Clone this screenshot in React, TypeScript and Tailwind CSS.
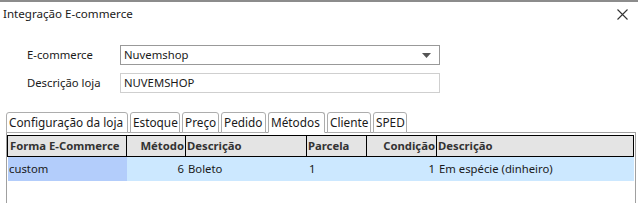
import React from 'react';

const tabs = [
    { label: 'Configuração da loja', w: 'w-[122px]' },
    { label: 'Estoque', w: 'w-[50px]' },
    { label: 'Preço', w: 'w-[37px]' },
    { label: 'Pedido', w: 'w-[45px]' },
    { label: 'Métodos', w: 'w-[57px]', active: true },
    { label: 'Cliente', w: 'w-[44px]' },
    { label: 'SPED', w: 'w-[34px]' },
];

const cols = 'grid grid-cols-[119px_59px_121px_60px_70px_1fr]';

export default function App() {
    return (
        <div
            className="relative w-[638px] h-[203px] overflow-hidden bg-white border-t-2 border-[#8c8c8c] text-[11.3px] text-[#1a1a1a]"
            style={{ fontFamily: '"Noto Sans", "Open Sans", sans-serif' }}
        >
            {/* title bar */}
            <div className="flex items-center justify-between h-[24px] pl-[3px] pr-[10px]">
                <span className="text-[11.6px]">Integração E-commerce</span>
                <svg width="11" height="11" viewBox="0 0 11 11" className="text-[#333]">
                    <path d="M0.5 0.5L10.5 10.5M10.5 0.5L0.5 10.5" stroke="currentColor" strokeWidth="1.1" />
                </svg>
            </div>

            {/* form */}
            <div className="flex flex-col gap-[8px] pt-[19px] pl-[27px]">
                <div className="flex items-center h-[20px]">
                    <span className="w-[93px]">E-commerce</span>
                    <div className="flex items-center justify-between w-[320px] h-[20px] border border-[#999] px-[3px]">
                        <span>Nuvemshop</span>
                        <svg width="9" height="5" viewBox="0 0 9 5" className="mr-[5px]">
                            <path d="M0 0H9L4.5 5Z" fill="#555" />
                        </svg>
                    </div>
                </div>
                <div className="flex items-center h-[20px]">
                    <span className="w-[93px]">Descrição loja</span>
                    <div className="flex items-center w-[320px] h-[20px] border border-[#cfcfcf] px-[3px]">
                        <span>NUVEMSHOP</span>
                    </div>
                </div>
            </div>

            {/* tabs */}
            <div className="flex gap-[2px] mt-[19px] pl-[6px] h-[21px] items-end">
                {tabs.map((t) => (
                    <div
                        key={t.label}
                        className={`${t.w} h-[21px] pl-[2px] leading-[19px] border border-[#adadad] rounded-t-[3px] bg-white whitespace-nowrap text-[11.8px] ${t.active ? 'border-b-white relative z-10' : ''}`}
                    >
                        {t.label}
                    </div>
                ))}
            </div>

            {/* panel */}
            <div className="ml-[6px] mr-[2px] -mt-px h-[80px] border-t border-l border-r border-[#a0a0a0] pt-[2px]">
                <div className="mr-px border border-black">
                    <div className={`${cols} h-[20px] bg-[#e4e4e4] font-bold text-[#333] leading-[19px] whitespace-nowrap`}>
                        <div className="border-r border-black pl-[2px] overflow-hidden">Forma E-Commerce</div>
                        <div className="border-r border-black pr-px text-right overflow-hidden">Método</div>
                        <div className="border-r border-black pl-px overflow-hidden">Descrição</div>
                        <div className="border-r border-black pl-px overflow-hidden">Parcela</div>
                        <div className="border-r border-black pr-px text-right overflow-hidden">Condição</div>
                        <div className="pl-px overflow-hidden">Descrição</div>
                    </div>
                </div>
                <div className={`${cols} h-[24px] leading-[24px] bg-[#cce8ff] mr-px ml-px whitespace-nowrap`}>
                    <div className="bg-[#b3cdfb] pl-px">custom</div>
                    <div className="pr-[2px] text-right">6</div>
                    <div className="pl-[2px]">Boleto</div>
                    <div className="pl-[2px]">1</div>
                    <div className="pr-[2px] text-right">1</div>
                    <div className="pl-[2px]">Em espécie (dinheiro)</div>
                </div>
            </div>
        </div>
    );
}
